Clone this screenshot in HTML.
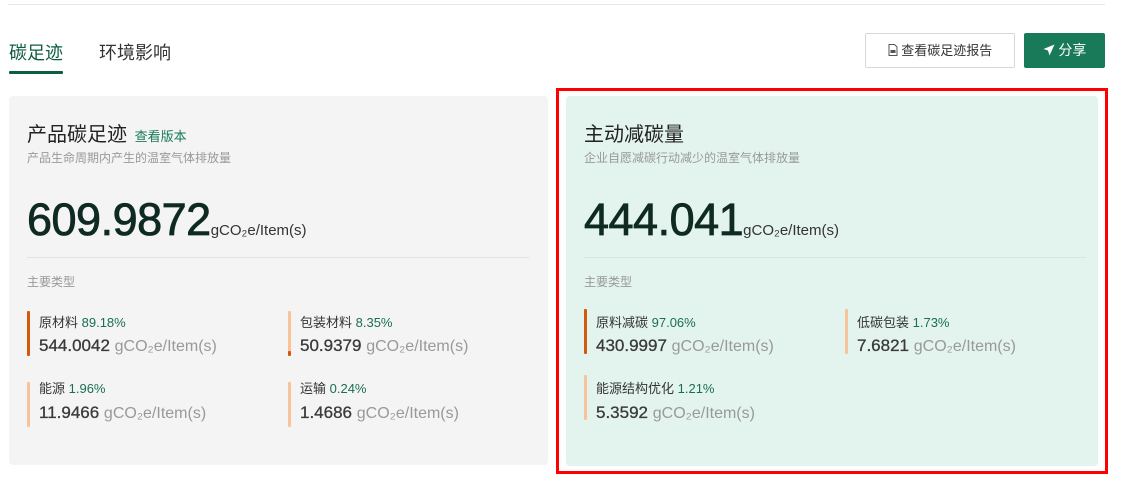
<!DOCTYPE html>
<html><head><meta charset="utf-8"><style>
*{margin:0;padding:0;box-sizing:border-box}
body{width:1126px;height:479px;background:#fff;font-family:"Liberation Sans","Noto Sans CJK SC",sans-serif;position:relative;overflow:hidden;color:#222}
.a{position:absolute;white-space:nowrap}
.card{position:absolute;border-radius:4px}
.bar{position:absolute;width:3px;border-radius:1px}
.lab{font-size:13px;color:#333}
.lab b{font-weight:normal;color:#1a6e52}
.val{font-size:17px;color:#3a3a3a;-webkit-text-stroke:0.3px #3a3a3a}
.val span{color:#999;font-size:16px;-webkit-text-stroke:0}
.big{font-size:45px;color:#0e2a22;-webkit-text-stroke:0.8px #0e2a22;letter-spacing:-0.5px}
.big span{font-size:15px;color:#333;-webkit-text-stroke:0;letter-spacing:0}
</style></head><body>
<div class="a" style="left:8px;top:4px;width:1097px;height:1px;background:#e4e6ea"></div>
<div class="a" style="left:9px;top:39px;font-size:18px;color:#0d5c44">碳足迹</div>
<div class="a" style="left:9px;top:71px;width:54px;height:3px;background:#0d5c44;border-radius:1px"></div>
<div class="a" style="left:99px;top:39px;font-size:18px;color:#333">环境影响</div>
<div class="a" style="left:865px;top:33px;width:150px;height:35px;border:1px solid #d6d8dc;border-radius:2px;font-size:13px;color:#333;text-align:center;line-height:33px">
<svg width="10" height="12" viewBox="0 0 10 12" style="vertical-align:-1px"><path d="M1 .5h5.5L9 3v8.5H1z" fill="none" stroke="#555"/><rect x="2.5" y="6" width="5" height="3" fill="#555"/></svg> 查看碳足迹报告</div>
<div class="a" style="left:1024px;top:33px;width:81px;height:35px;background:#197a5a;border-radius:2px;font-size:14px;color:#fff;text-align:center;line-height:35px">
<svg width="12" height="12" viewBox="0 0 12 12" style="vertical-align:-1px"><path d="M11.5.5L.5 5l4.5 1.5L6.5 11.5z" fill="#fff"/></svg> 分享</div>

<div class="card" style="left:9px;top:96px;width:539px;height:369px;background:#f4f4f4"></div>
<div class="a" style="left:27px;top:118px;font-size:20px;color:#222">产品碳足迹 <span style="font-size:13px;color:#1a7a5a;margin-left:2px">查看版本</span></div>
<div class="a" style="left:27px;top:149px;font-size:12px;color:#999">产品生命周期内产生的温室气体排放量</div>
<div class="a big" style="left:27px;top:194px">609.9872<span>gCO₂e/Item(s)</span></div>
<div class="a" style="left:27px;top:257px;width:502px;height:1px;background:#e3e3e3"></div>
<div class="a" style="left:27px;top:273px;font-size:12px;color:#999">主要类型</div>

<div class="bar" style="left:27px;top:311px;height:45px;background:#d35a0d"></div>
<div class="a lab" style="left:39px;top:312px">原材料 <b>89.18%</b></div>
<div class="a val" style="left:39px;top:336px">544.0042 <span>gCO₂e/Item(s)</span></div>
<div class="bar" style="left:288px;top:311px;height:45px;background:#f9c39a"></div>
<div class="bar" style="left:288px;top:351px;height:5px;background:#d35a0d"></div>
<div class="a lab" style="left:300px;top:312px">包装材料 <b>8.35%</b></div>
<div class="a val" style="left:300px;top:336px">50.9379 <span>gCO₂e/Item(s)</span></div>
<div class="bar" style="left:27px;top:382px;height:45px;background:#f9c39a"></div>
<div class="a lab" style="left:39px;top:378px">能源 <b>1.96%</b></div>
<div class="a val" style="left:39px;top:403px">11.9466 <span>gCO₂e/Item(s)</span></div>
<div class="bar" style="left:288px;top:382px;height:45px;background:#f9c39a"></div>
<div class="a lab" style="left:300px;top:378px">运输 <b>0.24%</b></div>
<div class="a val" style="left:300px;top:403px">1.4686 <span>gCO₂e/Item(s)</span></div>

<div class="a" style="left:556px;top:88px;width:552px;height:386px;border:3px solid #f00"></div>
<div class="card" style="left:566px;top:96px;width:532px;height:370px;background:#e3f4ee"></div>
<div class="a" style="left:584px;top:118px;font-size:20px;color:#222">主动减碳量</div>
<div class="a" style="left:584px;top:149px;font-size:12px;color:#999">企业自愿减碳行动减少的温室气体排放量</div>
<div class="a big" style="left:584px;top:194px">444.041<span>gCO₂e/Item(s)</span></div>
<div class="a" style="left:584px;top:257px;width:502px;height:1px;background:#d5e6df"></div>
<div class="a" style="left:584px;top:273px;font-size:12px;color:#999">主要类型</div>

<div class="bar" style="left:584px;top:309px;height:45px;background:#d35a0d"></div>
<div class="a lab" style="left:596px;top:312px">原料减碳 <b>97.06%</b></div>
<div class="a val" style="left:596px;top:336px">430.9997 <span>gCO₂e/Item(s)</span></div>
<div class="bar" style="left:845px;top:309px;height:45px;background:#f9c39a"></div>
<div class="a lab" style="left:857px;top:312px">低碳包装 <b>1.73%</b></div>
<div class="a val" style="left:857px;top:336px">7.6821 <span>gCO₂e/Item(s)</span></div>
<div class="bar" style="left:584px;top:375px;height:45px;background:#f9c39a"></div>
<div class="a lab" style="left:596px;top:378px">能源结构优化 <b>1.21%</b></div>
<div class="a val" style="left:596px;top:403px">5.3592 <span>gCO₂e/Item(s)</span></div>
</body></html>
